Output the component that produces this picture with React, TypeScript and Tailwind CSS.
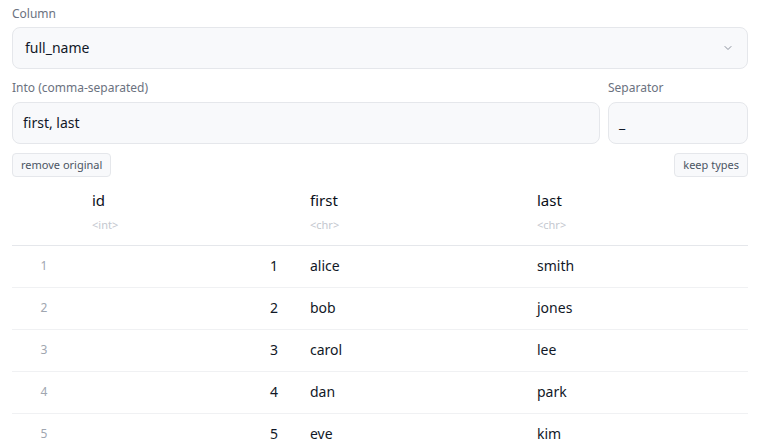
import { ChevronDown } from "lucide-react";

const rows = [
  { id: 1, first: "alice", last: "smith" },
  { id: 2, first: "bob", last: "jones" },
  { id: 3, first: "carol", last: "lee" },
  { id: 4, first: "dan", last: "park" },
  { id: 5, first: "eve", last: "kim" },
];

const cols = [
  { name: "id", type: "<int>" },
  { name: "first", type: "<chr>" },
  { name: "last", type: "<chr>" },
];

export default function App() {
  return (
    <div
      className="h-[440px] w-[760px] overflow-hidden bg-white px-3 pt-[6px] text-[#111827]"
      style={{ fontFamily: '"Noto Sans", "Open Sans", sans-serif' }}
    >
      <label className="mb-[5px] block text-xs leading-4 text-[#6b7280]">Column</label>
      <div className="flex h-[42px] items-center justify-between rounded-lg border border-[#e5e7eb] bg-[#f8f9fb] pl-3 pr-[13px]">
        <span className="text-sm">full_name</span>
        <ChevronDown className="h-3 w-3 text-[#8b919c]" strokeWidth={2} />
      </div>

      <div className="mt-[11px] flex gap-2">
        <div className="flex-1">
          <label className="mb-[6px] block text-xs leading-4 text-[#6b7280]">Into (comma-separated)</label>
          <div className="flex h-[42px] items-center rounded-lg border border-[#e5e7eb] bg-[#f8f9fb] px-[10px] text-sm">
            first, last
          </div>
        </div>
        <div className="w-[140px]">
          <label className="mb-[6px] block text-xs leading-4 text-[#6b7280]">Separator</label>
          <div className="flex h-[42px] items-center rounded-lg border border-[#e5e7eb] bg-[#f8f9fb] px-[10px] text-sm">
            _
          </div>
        </div>
      </div>

      <div className="mt-[9px] flex justify-between">
        <button className="h-6 rounded border border-[#e5e7eb] bg-[#f8f9fb] px-2 text-[11px] text-[#4b5563]">
          remove original
        </button>
        <button className="h-6 rounded border border-[#e5e7eb] bg-[#f8f9fb] px-2 text-[11px] text-[#4b5563]">
          keep types
        </button>
      </div>

      <table className="mt-2 w-full table-fixed border-collapse text-sm">
        <colgroup>
          <col className="w-[64px]" />
          <col className="w-[218px]" />
          <col className="w-[227px]" />
          <col className="w-[227px]" />
        </colgroup>
        <thead>
          <tr className="border-b border-[#e5e7eb]">
            <th />
            {cols.map((c) => (
              <th key={c.name} className="h-[60px] px-4 pt-[5px] text-left align-top font-normal text-[#0b0f19]">
                <div className="text-[15px] leading-5">{c.name}</div>
                <div className="mt-[9px] text-[11px] leading-3 text-[#c4c8cf]">{c.type}</div>
              </th>
            ))}
          </tr>
        </thead>
        <tbody>
          {rows.map((r, i) => (
            <tr key={r.id} className={i < rows.length - 1 ? "border-b border-[#f0f1f3]" : ""}>
              <td className="h-[42px] text-center text-xs text-[#a0a6b0]">{i + 1}</td>
              <td className="px-4 text-right">{r.id}</td>
              <td className="px-4">{r.first}</td>
              <td className="px-4">{r.last}</td>
            </tr>
          ))}
        </tbody>
      </table>
    </div>
  );
}
